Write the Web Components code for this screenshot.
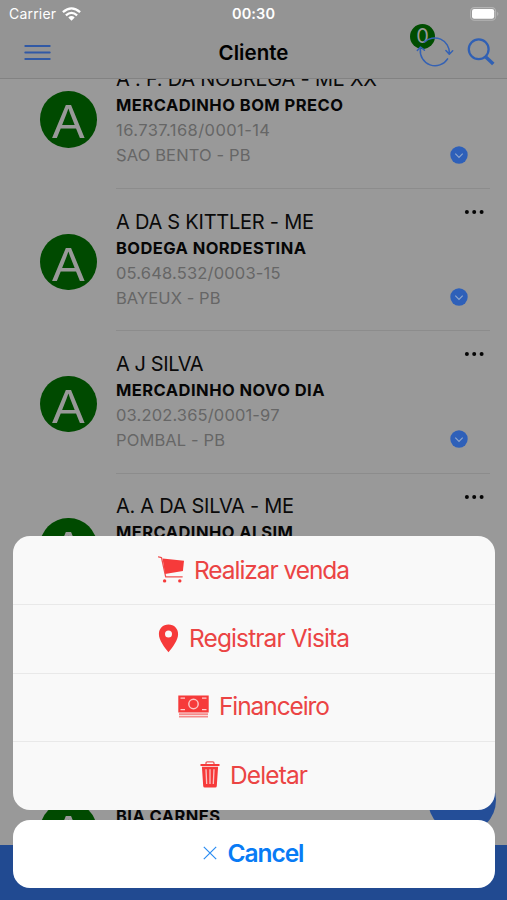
<!DOCTYPE html>
<html lang="pt-BR">
<head>
<meta charset="utf-8">
<title>Cliente</title>
<style>
html,body{margin:0;height:100%;overflow:hidden;background:#999}
body{font-family:Inter,"Liberation Sans",sans-serif}
</style>
</head>
<body>
<cliente-app></cliente-app>
<script>
const define = (name, html, after) => customElements.define(name, class extends HTMLElement {
  connectedCallback() {
    if (!this.shadowRoot) {
      const a = k => this.getAttribute(k) || '';
      this.attachShadow({mode: 'open'}).innerHTML = typeof html === 'function' ? html(a) : html;
    }
    if (after) after(this);
  }
});

// Single line of text whose tracking is adjusted to a given width.
define('fit-text', `<style>:host{display:block;white-space:nowrap}span{display:inline-block}</style><span><slot></slot></span>`, el => {
  const n = el.textContent.length;
  if (n < 2) return;
  const s = el.shadowRoot.querySelector('span');
  const d = +el.getAttribute('w') - s.getBoundingClientRect().width;
  s.style.letterSpacing = (d / (n - 1)) + 'px';
  s.style.marginRight = (-d / (n - 1)) + 'px';
});

define('status-bar', `<style>
:host{display:grid;grid-template-columns:1fr auto 1fr;align-items:center;height:27px;padding:0 7px 0 9px;color:#fff;font-size:14px}
.l{display:flex;align-items:center;gap:6px}
.t{font-weight:600;font-size:14.5px;margin-left:-2px}
.b{justify-self:end}
svg{display:block}
</style>
<div class="l"><fit-text w="47">Carrier</fit-text>
<svg width="19" height="14" viewBox="0 0 19 14"><g fill="none" stroke="#fff" stroke-width="2.3"><path d="M.9 5.2Q9.5-2.5 18.1 5.2"/><path d="M3.9 8.4Q9.5 3.4 15.1 8.4"/></g><path d="M6.3 10.4Q9.5 7.8 12.7 10.4L9.5 13.8Z" fill="#fff"/></svg></div>
<fit-text class="t" w="43">00:30</fit-text>
<svg class="b" width="30" height="14" viewBox="0 0 30 14"><rect x=".6" y=".6" width="25" height="12.6" rx="3.8" fill="none" stroke="#b4b4b4" stroke-width="1.1"/><rect x="2" y="2" width="22.2" height="9.8" rx="2.2" fill="#fff"/><path d="M27.2 4.8Q29.6 6.9 27.2 9Z" fill="#b4b4b4"/></svg>`);

define('nav-bar', `<style>
:host{display:grid;grid-template-columns:1fr auto 1fr;align-items:center;height:50px;padding:0 12px 1px;border-bottom:1px solid #828282}
.m{margin-left:12px}
.t{font-weight:600;font-size:20.5px;color:#000}
.r{justify-self:end;display:flex;align-items:center;gap:13px}
.sync{position:relative;width:38px;height:36px}
.badge{position:absolute;left:-6px;top:-10px;width:25px;height:25px;border-radius:50%;background:#004d00;color:#999;font-size:20px;line-height:25px;text-align:center}
.sync svg{position:absolute;left:0;top:0}
svg{display:block}
</style>
<svg class="m" width="27" height="17" viewBox="0 0 27 17"><path d="M1.3 2H25.7M1.3 8.6H25.7M1.3 15H25.7" stroke="#3159a5" stroke-width="2" stroke-linecap="round"/></svg>
<fit-text class="t" w="70">Cliente</fit-text>
<div class="r"><div class="sync"><div class="badge">0</div>
<svg width="38" height="36" viewBox="0 0 38 36" fill="none" stroke="#3562b4" stroke-width="1.5" stroke-linecap="round" stroke-linejoin="round"><path d="M8.2 8.2A14.8 14.8 0 0 1 33.4 19.3M29.9 16.5L33.3 20.2L36.7 16.8M31.6 24.8A14.8 14.8 0 0 1 4.4 15M1.3 16.5L4.5 13L8.4 16.2"/></svg></div>
<svg width="28" height="28" viewBox="0 0 28 28" fill="none" stroke="#3060b4"><circle cx="11.7" cy="11.2" r="9.9" stroke-width="2.3"/><path d="M18.8 19L26.3 26" stroke-width="3.5"/></svg></div>`);

define('client-row', a => `<style>
:host{display:grid;grid-template-columns:56px 1fr 36px;column-gap:20px;height:142.2px;padding:0 16px 0 40px;box-sizing:border-box;background:linear-gradient(#8c8c8c,#8c8c8c) 116px 100%/374px 1px no-repeat}
.av{width:56.5px;height:56.5px;margin-top:44.3px;border-radius:50%;background:#004a00;color:#999;font-size:49px;line-height:60px;text-align:center;font-family:"Liberation Sans",sans-serif}
.tx{padding-top:19.3px}
.n{height:27px;font-size:20px;line-height:27px;color:#0a0a0a}
.b{font-size:16.5px;line-height:24px;font-weight:700;color:#060606}
.d{font-size:16.5px;line-height:27px;color:#666}
.c{font-size:16.5px;line-height:22px;color:#666}
.ic{display:flex;flex-direction:column;align-items:flex-end;padding-top:21px}
svg{display:block}.go{margin:74px 23px 0 0}
</style>
<div class="av">A</div>
<div class="tx"><fit-text class="n" w="${a('nw')}">${a('name')}</fit-text><fit-text class="b" w="${a('bw')}">${a('trade')}</fit-text><fit-text class="d" w="${a('dw')}">${a('doc')}</fit-text><fit-text class="c" w="${a('cw')}">${a('city')}</fit-text></div>
<div class="ic"><svg width="27" height="4" viewBox="0 0 27 4" fill="#050505"><circle cx="2.9" cy="2" r="2"/><circle cx="10.2" cy="2" r="2"/><circle cx="17.6" cy="2" r="2"/></svg>
<svg class="go" width="18" height="18" viewBox="0 0 18 18"><circle cx="9" cy="9" r="8.7" fill="#2e60b9"/><path d="M5.3 7.7L9 11.4L12.7 7.7" fill="none" stroke="#8fa6cc" stroke-width="1.2"/></svg></div>`);

define('sheet-action', a => `<style>
:host{display:flex;align-items:center;justify-content:center;gap:${a('gap') || 10}px;box-sizing:border-box;height:68.4px;color:#eb4444;font-size:24.5px;padding-bottom:1px}
:host(:not(:first-child)){box-shadow:inset 0 1px #e9e9e9}
::slotted(svg){display:block;flex:none}
</style><slot name="icon"></slot><fit-text w="${a('w')}">${a('label')}</fit-text>`);

define('action-sheet', `<style>
:host{display:flex;flex-direction:column;gap:10px;position:absolute;left:13px;top:536px;width:482px}
.g{border-radius:17px;background:#f9f9f9;overflow:hidden;height:273.6px}
.c{display:flex;align-items:center;justify-content:center;gap:11px;height:68.2px;padding:0 1px 1px 0;box-sizing:border-box;border-radius:17px;background:#fff;color:#087bf5;font-size:24.5px;font-weight:600}
svg{display:block}
</style>
<div class="g">
<sheet-action label="Realizar venda" w="156" gap="9"><svg slot="icon" width="27" height="27" viewBox="0 0 27 27"><path d="M4.6 2.6L26 4.8L24.9 15L7 18Z" fill="#f63a3a"/><path d="M.5.9L3.5 1.7L7.7 20.8H24.2" fill="none" stroke="#f05050" stroke-width="1.3" stroke-linecap="round" stroke-linejoin="round"/><circle cx="6.6" cy="24.9" r="1.7" fill="#f63a3a"/><circle cx="21.8" cy="24.9" r="1.7" fill="#f63a3a"/></svg></sheet-action>
<sheet-action label="Registrar Visita" w="161" gap="10"><svg slot="icon" width="21" height="29" viewBox="0 0 21 29"><path fill="#f63a3a" fill-rule="evenodd" d="M10.5.6C4.8.6.9 4.8.9 10C.9 16.3 6.4 23.2 10.5 28.2C14.6 23.2 20.1 16.3 20.1 10C20.1 4.8 16.2.6 10.5.6ZM10.5 6.4A3.5 3.5 0 1 1 10.5 13.4A3.5 3.5 0 1 1 10.5 6.4Z"/></svg></sheet-action>
<sheet-action label="Financeiro" w="111" gap="10"><svg slot="icon" width="31" height="23" viewBox="0 0 31 23"><path d="M.3.5H30.7V17.6H.3Z" fill="#f63a3a"/><path d="M1 19.2H30M1 21.7H30" stroke="#f58b8b" stroke-width="1.7"/><circle cx="15.5" cy="9" r="4.7" fill="none" stroke="#fbc4c4" stroke-width="1.5"/><path d="M2.5 3.2H7M24 3.2H28.5M2.5 14.6H7M24 14.6H28.5" stroke="#fcc" stroke-width="1.2"/></svg></sheet-action>
<sheet-action label="Deletar" w="78" gap="10"><svg slot="icon" width="20" height="27" viewBox="0 0 20 27"><path d="M6 3V2Q6 .9 7.2.9H12.8Q14 .9 14 2V3" fill="none" stroke="#ed5b5b" stroke-width="1.3"/><path d="M.5 3.1H19.5V5H.5ZM1.9 5.8H18.1L16.8 25Q16.7 26.5 15.2 26.5H4.8Q3.3 26.5 3.2 25Z" fill="#f63a3a"/><path d="M6 8.3L6.7 23M10 8.3V23M14 8.3L13.3 23" stroke="#fbc4c4" stroke-width="1.3"/></svg></sheet-action>
</div>
<div class="c"><svg width="14" height="14" viewBox="0 0 14 14"><path d="M.8.8L13.2 13.2M13.2.8L.8 13.2" stroke="#2a8cf2" stroke-width="1.2"/></svg><fit-text w="77">Cancel</fit-text></div>`);

define('cliente-app', `<style>
:host{display:flex;flex-direction:column;position:relative;width:507px;height:900px;overflow:hidden;background:#999}
header{background:#949494}
main{flex:1;min-height:0;overflow:hidden}
.list{margin-top:-31.9px}
.blank{height:142.2px}
footer{height:55px;background:#214a91}
.fab{position:absolute;left:427.5px;top:766px;width:68px;height:68px;border-radius:50%;background:#244e98}
</style>
<header><status-bar></status-bar><nav-bar></nav-bar></header>
<main><div class="list">
<client-row name="A . F. DA NOBREGA - ME XX" nw="261" trade="MERCADINHO BOM PRECO" bw="227" doc="16.737.168/0001-14" dw="154" city="SAO BENTO - PB" cw="134.5"></client-row>
<client-row name="A DA S KITTLER - ME" nw="198" trade="BODEGA NORDESTINA" bw="190" doc="05.648.532/0003-15" dw="164.5" city="BAYEUX - PB" cw="104.5"></client-row>
<client-row name="A J SILVA" nw="87.5" trade="MERCADINHO NOVO DIA" bw="208.5" doc="03.202.365/0001-97" dw="163.5" city="POMBAL - PB" cw="109"></client-row>
<client-row name="A. A DA SILVA - ME" nw="178" trade="MERCADINHO AI SIM" bw="177" doc="" city=""></client-row>
<div class="blank"></div>
<client-row name="" trade="BIA CARNES" bw="104" doc="" city=""></client-row>
</div></main>
<footer></footer><div class="fab"></div>
<action-sheet></action-sheet>`);
</script>
</body>
</html>
